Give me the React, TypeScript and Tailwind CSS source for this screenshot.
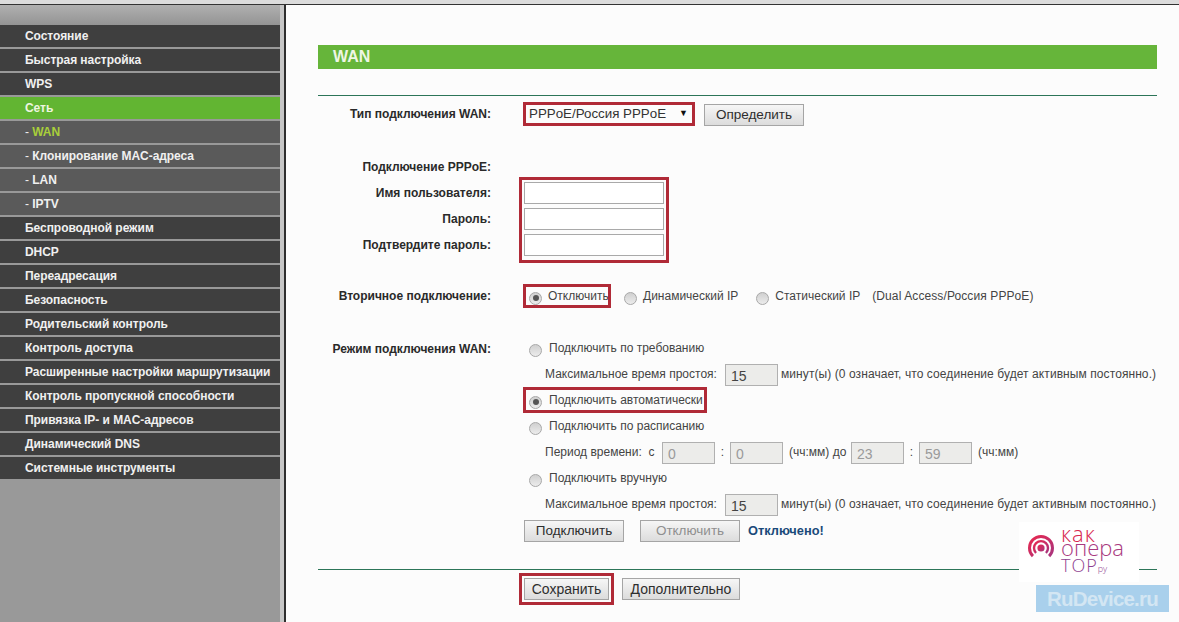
const menu: [string, "main" | "active" | "sub" | "subactive"][] = [
  ["Состояние", "main"],
  ["Быстрая настройка", "main"],
  ["WPS", "main"],
  ["Сеть", "active"],
  ["WAN", "subactive"],
  ["Клонирование MAC-адреса", "sub"],
  ["LAN", "sub"],
  ["IPTV", "sub"],
  ["Беспроводной режим", "main"],
  ["DHCP", "main"],
  ["Переадресация", "main"],
  ["Безопасность", "main"],
  ["Родительский контроль", "main"],
  ["Контроль доступа", "main"],
  ["Расширенные настройки маршрутизации", "main"],
  ["Контроль пропускной способности", "main"],
  ["Привязка IP- и MAC-адресов", "main"],
  ["Динамический DNS", "main"],
  ["Системные инструменты", "main"],
];

function MenuRow({ text, kind }: { text: string; kind: string }) {
  if (kind === "active")
    return <div className="h-[22px] mb-[2px] bg-[#62b532] pl-[25px] leading-[23px] text-[12px] font-bold tracking-[-0.05px] text-[#eef5e0]">{text}</div>;
  if (kind === "sub" || kind === "subactive")
    return (
      <div className="h-[22px] mb-[2px] bg-[#5a5a5a] pl-[25px] leading-[23px] text-[12px] font-bold tracking-[-0.05px] text-[#f0f0f0]">
        <span className="font-normal">- </span>
        <span className={kind === "subactive" ? "text-[#a9cf3a]" : ""}>{text}</span>
      </div>
    );
  return <div className="h-[22px] mb-[2px] bg-[#3f3f3f] pl-[25px] leading-[23px] text-[12px] font-bold tracking-[-0.05px] text-[#f0f0f0]">{text}</div>;
}

function Label({ children, className = "" }: { children: React.ReactNode; className?: string }) {
  return <div className={`w-[173px] mr-[33px] shrink-0 text-right text-[12px] font-bold text-[#2a2a2a] ${className}`}>{children}</div>;
}

function Radio({ checked = false }: { checked?: boolean }) {
  return (
    <span className="inline-flex items-center justify-center w-[13px] h-[13px] rounded-full border border-[#a8a8a8] bg-gradient-to-b from-[#d0d0d0] to-[#ececec] shrink-0 relative top-[2px]">
      {checked && <span className="w-[6px] h-[6px] rounded-full bg-[#555]" />}
    </span>
  );
}

function Btn({ children, className = "", disabled = false }: { children: React.ReactNode; className?: string; disabled?: boolean }) {
  return (
    <div className={`h-[22px] flex items-center justify-center border border-[#a5a5a5] bg-gradient-to-b from-[#f6f6f6] to-[#dcdcdc] ${disabled ? "text-[#8f8f8f]" : "text-[#2e2e2e]"} ${className}`}>
      {children}
    </div>
  );
}

function Num({ value, muted = false }: { value: string; muted?: boolean }) {
  return (
    <div className={`relative top-[1px] w-[53px] h-[22px] border border-[#b0b0b0] bg-[#ececea] pl-[5px] leading-[22px] text-[14px] ${muted ? "text-[#9a9a9a]" : "text-[#444]"}`}>
      {value}
    </div>
  );
}

function TextField() {
  return <div className="w-[140px] h-[22px] border border-[#a9a9a9] bg-white" />;
}

const red = "outline-[3px] outline-[#b02a37]";

function IdleRow() {
  return (
    <div className="h-[26px] flex items-center pl-[21px] text-[12px] text-[#444]">
      <span className="w-[180px]">Максимальное время простоя:</span>
      <Num value="15" />
      <span className="ml-[3px] tracking-[0.08px]">минут(ы) (0 означает, что соединение будет активным постоянно.)</span>
    </div>
  );
}

export default function App() {
  return (
    <div className="relative w-[1179px] h-[622px] overflow-hidden bg-[#fcfcfc] font-['Liberation_Sans',Arial,sans-serif]">
      <div className="h-[5px] bg-[#dcdcdc] border-b border-[#333]" />
      <div className="flex h-[617px]">
        <aside className="w-[280px] h-full shrink-0 bg-[#999]">
          <div className="h-[20px] bg-gradient-to-b from-[#b0b0b0] to-[#949494]" />
          {menu.map(([t, k]) => (
            <MenuRow key={t} text={t} kind={k} />
          ))}
        </aside>
        <div className="w-[4px] bg-[#c6c6c6]" />
        <div className="w-[2px] bg-[#2e2e2e]" />
        <main className="flex-1 pl-[32px] pr-[22px]">
          <div className="mt-[40px] h-[24px] bg-[#66b53a] pl-[15px] leading-[24px] text-[16px] font-bold text-[#eef6e4]">WAN</div>
          <div className="mt-[26px] h-[1px] bg-[#2c7558]" />

          <div className="mt-[6px] h-[24px] flex items-center">
            <Label>Тип подключения WAN:</Label>
            <div className={`relative left-[2px] w-[166px] h-[18px] flex items-center justify-between pl-[3px] pr-[4px] text-[13.33px] text-[#333] ${red}`}>
              <span>PPPoE/Россия PPPoE</span>
              <span className="text-[9px] text-[#111]">▼</span>
            </div>
            <Btn className="ml-[14px] w-[100px] relative top-[1px] text-[13.5px]">Определить</Btn>
          </div>

          <div className="mt-[28px] h-[26px] flex items-center">
            <Label>Подключение PPPoE:</Label>
          </div>
          <div className="flex">
            <div>
              <Label className="h-[26px] leading-[26px]">Имя пользователя:</Label>
              <Label className="h-[26px] leading-[26px]">Пароль:</Label>
              <Label className="h-[26px] leading-[26px]">Подтвердите пароль:</Label>
            </div>
            <div className={`mt-[2px] h-[76px] w-[140px] ${red} outline-offset-[2px] flex flex-col gap-[4px]`}>
              <TextField />
              <TextField />
              <TextField />
            </div>
          </div>

          <div className="mt-[25px] h-[26px] flex items-center">
            <Label>Вторичное подключение:</Label>
            <div className={`ml-[2px] h-[18px] w-[82px] flex items-center gap-[6px] pl-[3px] text-[12px] text-[#444] ${red}`}>
              <Radio checked />
              <span>Отключить</span>
            </div>
            <div className="ml-[16px] flex items-center gap-[6px] text-[12px] text-[#444]">
              <Radio />
              <span>Динамический IP</span>
            </div>
            <div className="ml-[18px] flex items-center gap-[6px] text-[12px] text-[#444]">
              <Radio />
              <span>Статический IP</span>
            </div>
            <span className="ml-[12px] text-[12px] text-[#444] tracking-[0.1px]">(Dual Access/Россия PPPoE)</span>
          </div>

          <div className="mt-[26px] flex">
            <Label className="h-[26px] leading-[28px]">Режим подключения WAN:</Label>
            <div className="flex-1">
              <div className="h-[26px] flex items-center gap-[7px] pl-[5px] text-[12px] text-[#444]">
                <Radio />
                <span>Подключить по требованию</span>
              </div>
              <IdleRow />
              <div className="h-[26px] flex items-center">
                <div className={`ml-[2px] h-[20px] w-[178px] flex items-center gap-[7px] pl-[3px] text-[12px] text-[#444] ${red}`}>
                  <Radio checked />
                  <span>Подключить автоматически</span>
                </div>
              </div>
              <div className="h-[26px] flex items-center gap-[7px] pl-[5px] text-[12px] text-[#444]">
                <Radio />
                <span>Подключить по расписанию</span>
              </div>
              <div className="h-[26px] flex items-center pl-[21px] text-[12px] text-[#444]">
                <span className="w-[117px]">Период времени:&nbsp; с</span>
                <Num value="0" muted />
                <span className="w-[15px] text-center">:</span>
                <Num value="0" muted />
                <span className="ml-[6px] w-[62px]">(чч:мм) до</span>
                <Num value="23" muted />
                <span className="w-[15px] text-center">:</span>
                <Num value="59" muted />
                <span className="ml-[6px]">(чч:мм)</span>
              </div>
              <div className="h-[26px] flex items-center gap-[7px] pl-[5px] text-[12px] text-[#444]">
                <Radio />
                <span>Подключить вручную</span>
              </div>
              <IdleRow />
              <div className="h-[26px] flex items-start">
                <Btn className="w-[100px] mt-[3px] text-[13.5px]">Подключить</Btn>
                <Btn disabled className="ml-[16px] w-[100px] mt-[3px] text-[13.5px]">Отключить</Btn>
                <span className="ml-[8px] mt-[4px] text-[12.8px] font-bold text-[#1a4a7a]">Отключено!</span>
              </div>
            </div>
          </div>

          <div className="mt-[26px] h-[1px] bg-[#2c7558]" />
          <div className="mt-[8px] flex pl-[206px]">
            <Btn className={`w-[85px] text-[14px] outline-offset-[2px] ${red}`}>Сохранить</Btn>
            <Btn className="ml-[13px] w-[118px] text-[14px]">Дополнительно</Btn>
          </div>
        </main>
      </div>

      <div className="absolute left-[1019px] top-[522px] w-[120px] h-[60px] bg-white flex items-start pl-[8px] font-['Open_Sans',sans-serif]">
        <svg width="30" height="30" viewBox="0 0 30 30" className="shrink-0 mt-[11px]">
          <defs>
            <linearGradient id="g" x1="0" y1="0" x2="1" y2="1">
              <stop offset="0" stopColor="#e8284f" />
              <stop offset="1" stopColor="#a8347e" />
            </linearGradient>
          </defs>
          <circle cx="14" cy="15" r="3.6" fill="url(#g)" />
          <path d="M5.9 23.1 A11.5 11.5 0 1 1 22.1 23.1" fill="none" stroke="url(#g)" strokeWidth="3" />
          <path d="M9 20 A7 7 0 1 1 19 20" fill="none" stroke="url(#g)" strokeWidth="2.4" />
        </svg>
        <div className="ml-[4px] mt-[4px] font-light">
          <div className="h-[14px] leading-[14px] text-[22px] text-[#d8274f] tracking-[1px]">как</div>
          <div className="h-[15px] leading-[14px] text-[22px] text-[#a93a80]">опера</div>
          <div className="h-[15px] leading-[20px] text-[18px] text-[#8f3f90] tracking-[1px]">
            ТОР<span className="text-[9px] tracking-normal">ру</span>
          </div>
        </div>
      </div>

      <div className="absolute left-[1036px] top-[585px] w-[133px] h-[27px] bg-[#a9d0ec] text-center leading-[27px] text-[20.5px] font-bold text-[#d3e6f3] tracking-[-0.8px]">
        RuDevice.ru
      </div>
    </div>
  );
}
